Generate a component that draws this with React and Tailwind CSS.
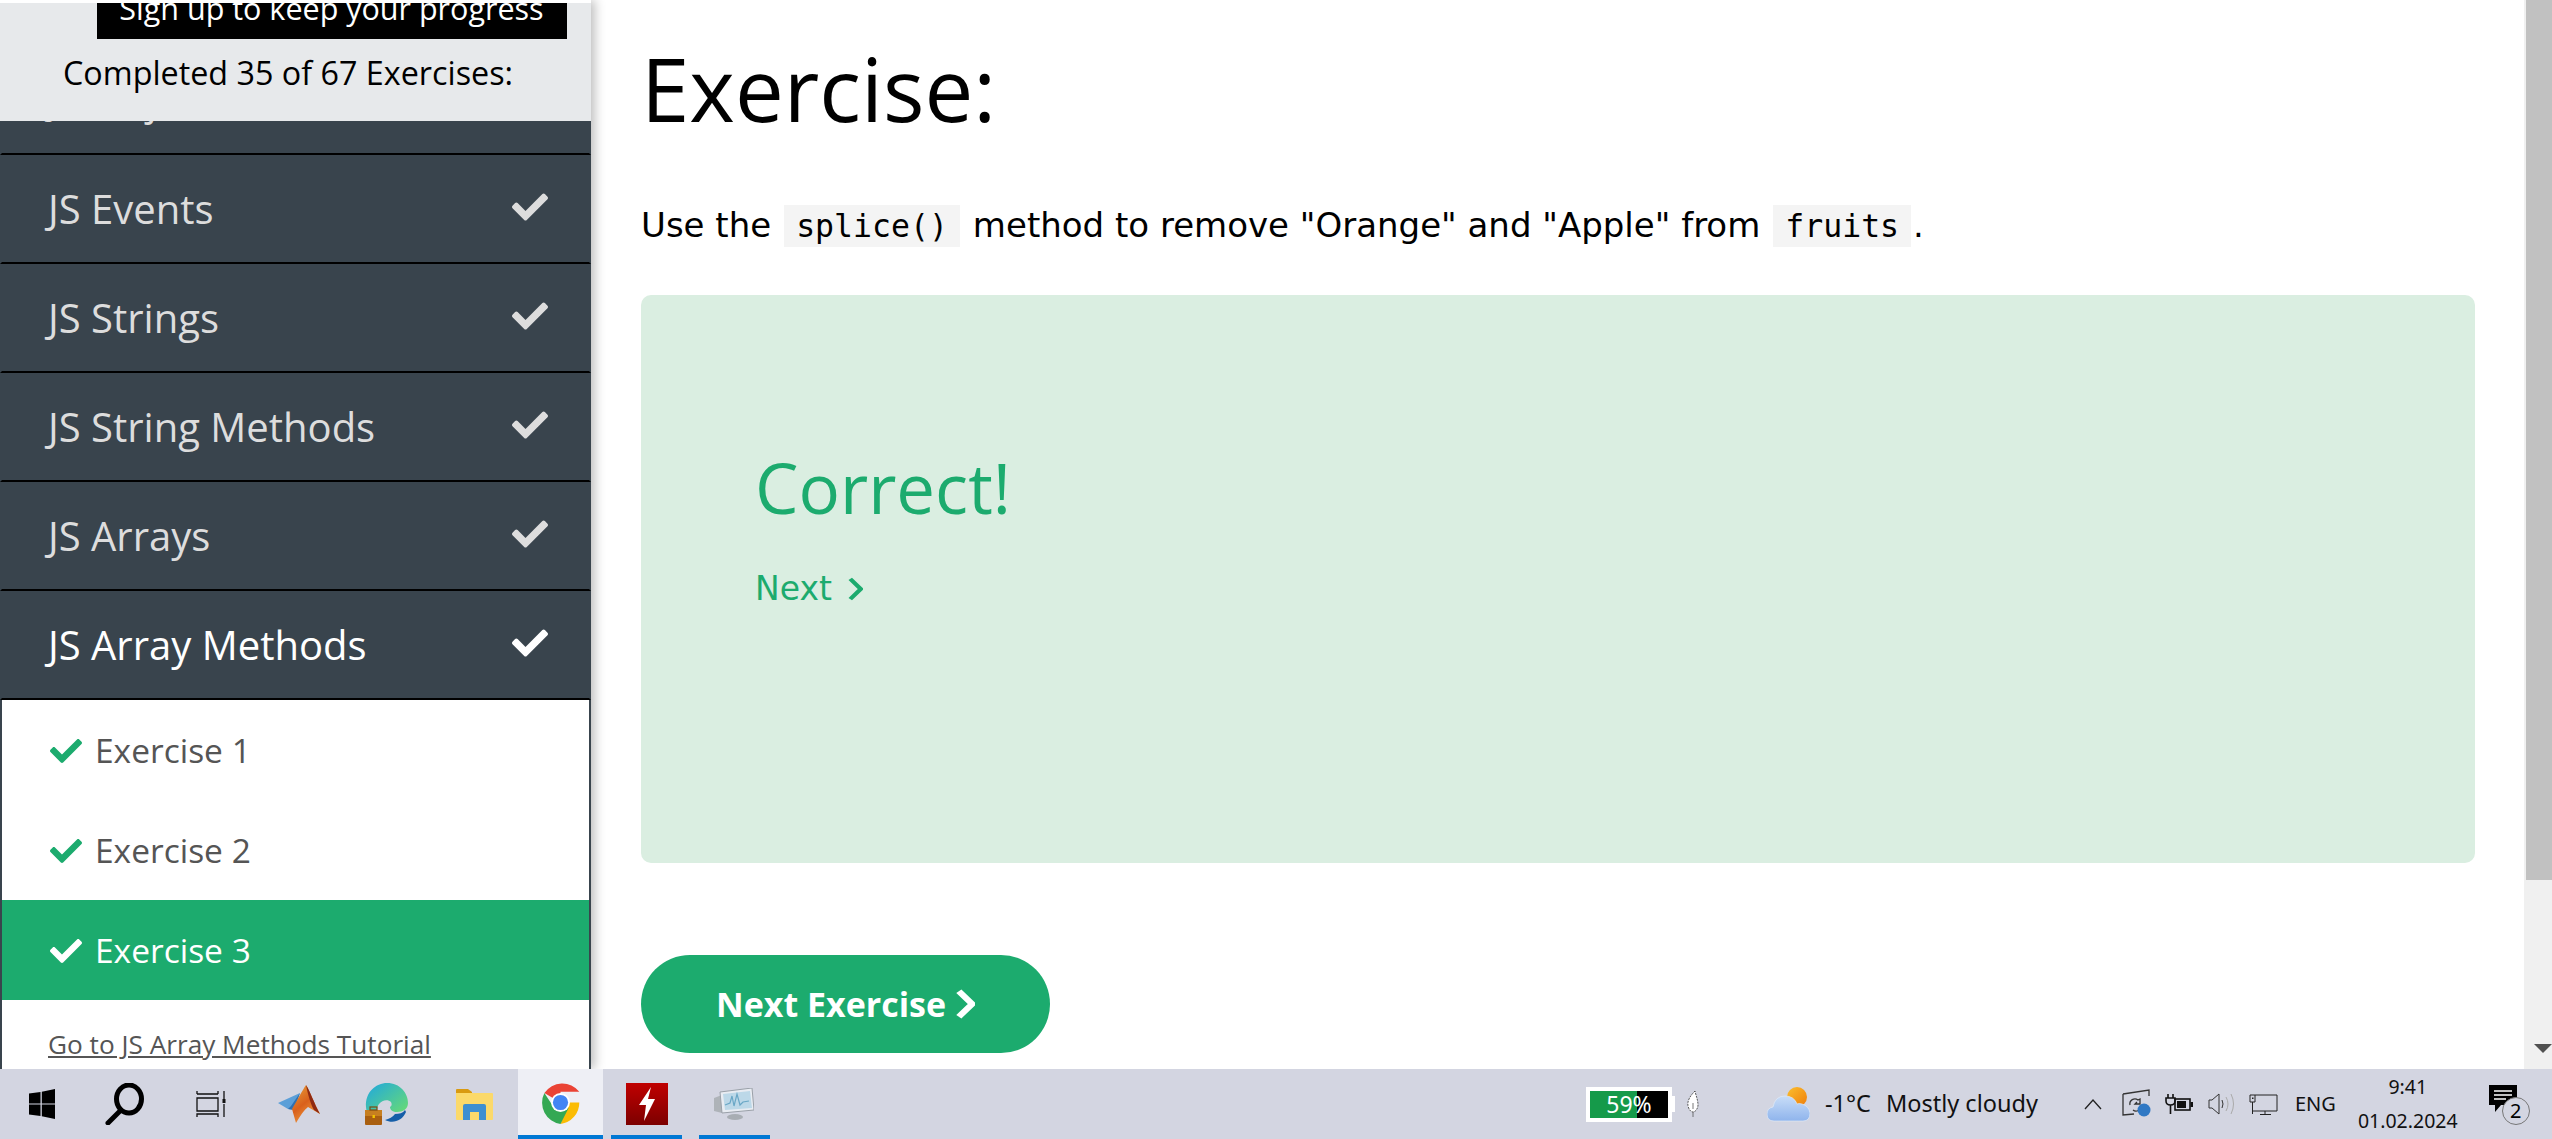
import { FaCheck } from "react-icons/fa";

const SEGOE = "font-['Open_Sans',sans-serif]";
const topics = ["JS Events", "JS Strings", "JS String Methods", "JS Arrays"];

function WindowsLogo() {
  return (
    <svg width="26" height="30" viewBox="0 0 26 30">
      <path d="M0 4.5 11.5 3v11.4H0zM12.8 2.8 26 0v14.4H12.8zM0 15.6h11.5V27L0 25.5zM12.800 15.600H26V30l-13.200-2.800z" fill="#000" />
    </svg>
  );
}

function SearchIcon() {
  return (
    <svg width="42" height="42" viewBox="0 0 42 42" fill="none" stroke="#000">
      <ellipse cx="25" cy="16" rx="12.5" ry="14" strokeWidth="5" />
      <path d="M16 28 4 40" strokeWidth="5" strokeLinecap="round" />
    </svg>
  );
}

function TaskViewIcon() {
  return (
    <svg width="30" height="28" viewBox="0 0 30 28" fill="none" stroke="#111" strokeWidth="1.3">
      <path d="M1 4V1M1 4h21M22 4V1M1 8h21v13H1zM1 27v-3h21v3M28 1v8M28 14v13" />
      <rect x="26.5" y="9" width="3" height="4" fill="#111" stroke="none" />
    </svg>
  );
}

function MatlabIcon() {
  return (
    <svg width="43" height="39" viewBox="0 0 43 39">
      <defs>
        <linearGradient id="ml" x1="0" y1="0" x2="0.6" y2="1">
          <stop offset="0" stopColor="#e8a33a" />
          <stop offset="0.55" stopColor="#d9601c" />
          <stop offset="1" stopColor="#f0a040" />
        </linearGradient>
      </defs>
      <path d="M0 18 22 8 16 25 10 24z" fill="#5b9fd8" />
      <path d="M10 24 16 25 22 8 13 21z" fill="#2f6fb0" />
      <path d="M28 0C24 6 20 14 14 24l4 14c4-7 8-13 12-16 4 2 8 5 12 7C36 18 32 6 28 0z" fill="url(#ml)" />
      <path d="M28 0c2 10 5 20 8 25l6 4C36 18 32 6 28 0z" fill="#8f2a12" />
    </svg>
  );
}

function EdgeIcon() {
  return (
    <svg width="43" height="43" viewBox="0 0 43 43">
      <defs>
        <linearGradient id="eg" x1="0" y1="0" x2="1" y2="1">
          <stop offset="0" stopColor="#1fa7e0" />
          <stop offset="1" stopColor="#6fe06a" />
        </linearGradient>
      </defs>
      <path d="M1 24C0 9 11 0 22 0c13 0 21 10 21 20 0 6-5 9-11 9-4 0-7-2-7-5 2-1 2-3 1-5-3-3-9-2-12 2-3 4-3 10 0 13C7 34 1 31 1 24z" fill="url(#eg)" />
      <path d="M20 37c8 4 17 1 21-8l-1-2c-2 3-6 4-10 4-2 3-6 5-10 6z" fill="#155ea8" />
      <rect x="0" y="27" width="17" height="15" rx="1" fill="#a95f10" />
      <rect x="0" y="27" width="17" height="6" fill="#c77f20" />
      <rect x="5" y="24" width="7" height="3" fill="none" stroke="#7b4a10" strokeWidth="1.2" />
      <rect x="7.5" y="32" width="2.4" height="3" fill="#f2c200" />
    </svg>
  );
}

function FolderIcon() {
  return (
    <svg width="37" height="31" viewBox="0 0 37 31">
      <path d="M0 1q0-1 1-1h11l4 3v4H0z" fill="#d99a10" />
      <path d="M0 4h36q1 0 1 1v25q0 1-1 1H1q-1 0-1-1z" fill="#fbd96a" />
      <path d="M7 31V17q0-2 2-2h19q2 0 2 2v14h-7v-8H14v8z" fill="#3d8fd1" />
    </svg>
  );
}

function ChromeIcon() {
  return (
    <svg width="43" height="43" viewBox="0 0 48 48">
      <path d="M24 24 6 13.5A24 24 0 0 1 45 12H24z" fill="#ea4335" />
      <path d="M24 24h21a24 24 0 0 1-21 24l9-24z" fill="#fbbc04" />
      <path d="M24 48A24 24 0 0 1 6 13.5L17 30l7-6 9 6z" fill="#34a853" />
      <circle cx="24" cy="24" r="10.5" fill="#fff" />
      <circle cx="24" cy="24" r="8.5" fill="#4285f4" />
    </svg>
  );
}

function FlashIcon() {
  return (
    <svg width="42" height="42" viewBox="0 0 42 42">
      <defs>
        <linearGradient id="fl" x1="0" y1="0" x2="0" y2="1">
          <stop offset="0" stopColor="#c00000" />
          <stop offset="1" stopColor="#7c0000" />
        </linearGradient>
      </defs>
      <rect width="42" height="42" fill="url(#fl)" />
      <path d="M25 4 13 22h7l-2 16 11-22h-7z" fill="#fff" />
    </svg>
  );
}

function ResourceIcon() {
  return (
    <svg width="40" height="32" viewBox="0 0 40 32">
      <path d="M0 10l8-3v18l-8-2z" fill="#aeb3b8" />
      <path d="M6 4 38 0l2 22-32 3z" fill="#e8ecf2" stroke="#9aa0a8" />
      <path d="M9 6 36 3l2 17-27 2z" fill="#bcd8e8" />
      <path d="M11 17l5-2 2-7 2 10 3-12 3 11 3-3 6-1" fill="none" stroke="#6aa7c6" strokeWidth="1.2" />
      <ellipse cx="21" cy="29" rx="8" ry="3" fill="#a8adb3" />
    </svg>
  );
}

function Leaf() {
  return (
    <svg width="12" height="28" viewBox="0 0 12 28">
      <path d="M8 1C3 6 0 11 1 16c1 4 3 6 5 6s5-3 5-7C11 10 9 6 8 1z" fill="#fff" stroke="#333" strokeDasharray="2 1" strokeWidth=".8" />
      <path d="M6 13v6M6 22v5" stroke="#555" strokeWidth=".8" />
    </svg>
  );
}

function WeatherIcon() {
  return (
    <svg width="43" height="35" viewBox="0 0 43 35">
      <defs>
        <linearGradient id="sun" x1="0" y1="0" x2="1" y2="1">
          <stop offset="0" stopColor="#fbbf2e" />
          <stop offset="1" stopColor="#ef7d0a" />
        </linearGradient>
        <linearGradient id="cl" x1="0" y1="0" x2="0" y2="1">
          <stop offset="0" stopColor="#c8ddf8" />
          <stop offset="1" stopColor="#8fb4ec" />
        </linearGradient>
      </defs>
      <circle cx="30" cy="10" r="10" fill="url(#sun)" />
      <path d="M7 34q-7 0-7-7 0-6 6-7 2-11 12-11 9 0 12 8 2-1 5 0 7 2 8 9 0 8-7 8z" fill="url(#cl)" stroke="#dfe9f7" strokeWidth=".7" />
    </svg>
  );
}

function SyncIcon() {
  return (
    <svg width="29" height="30" viewBox="0 0 29 30" fill="none">
      <path d="M1 5 27 1v6M1 5v21l11-1" stroke="#333" strokeWidth="1.3" />
      <path d="M8 16a5 5 0 0 1 8-5l2-1v5h-5l2-2M19 17a5 5 0 0 1-8 4" stroke="#333" strokeWidth="1.3" />
      <circle cx="22" cy="21" r="6.5" fill="#2f78c4" />
    </svg>
  );
}

function PowerIcon() {
  return (
    <svg width="28" height="20" viewBox="0 0 28 20" fill="none" stroke="#111" strokeWidth="1.6">
      <path d="M3 0v4M8 0v4M1 4h9v3q0 4-4.5 4T1 7zM5.5 11v9" />
      <rect x="10" y="5" width="15" height="11" />
      <rect x="12" y="7" width="9" height="7" fill="#111" stroke="none" />
      <rect x="25.5" y="8" width="2.5" height="5" fill="#111" stroke="none" />
    </svg>
  );
}

function SpeakerIcon() {
  return (
    <svg width="27" height="22" viewBox="0 0 27 22" fill="none" stroke="#333" strokeWidth="1">
      <path d="M1 7v8h3l7 6V1L4 7z" />
      <path d="M14 7q2 4 0 8" />
      <path d="M18 4q4 7 0 14M23 1q5 10 0 20" stroke="#aaa" />
    </svg>
  );
}

function NetworkIcon() {
  return (
    <svg width="29" height="21" viewBox="0 0 29 21" fill="none" stroke="#222" strokeWidth="1">
      <path d="M6 1h22v16H4" />
      <path d="M1 1h5v7H1zM3.500 8v12M16 17v3M11 20.500h11" />
      <rect x="3" y="3.500" width="1.500" height="1.500" fill="#222" stroke="none" />
    </svg>
  );
}

function MessageBadge() {
  return (
    <div className="relative w-[42px] h-[42px]">
      <svg width="29" height="27" viewBox="0 0 29 27">
        <path d="M0 0h28v20H12l-6 7v-7H0z" fill="#000" />
        <path d="M5 6h18M5 10h18M5 14h12" stroke="#fff" strokeWidth="1.5" />
      </svg>
      <span className="absolute left-[13px] top-[12px] w-[28px] h-[28px] rounded-full border border-[#777] bg-[#d3d5e1] flex items-center justify-center text-[20px] text-black font-['Noto_Sans',sans-serif]">
        2
      </span>
    </div>
  );
}

function Chevron({ w, h, stroke }) {
  return (
    <svg width={w} height={h} viewBox="0 0 10 20" preserveAspectRatio="none" fill="none" stroke="currentColor" strokeWidth={stroke}>
      <path d="M1.500 1.500 8.500 10l-7 8.500" />
    </svg>
  );
}

function TopicRow({ label, active }) {
  return (
    <div className={`h-[109px] shrink-0 border-x-2 border-x-[#39444d] border-b-2 border-b-black flex items-center justify-between pl-[46px] pr-[41px] ${active ? "text-white" : "text-[#dddddd]"}`}>
      <span className={`${SEGOE} text-[40px]`}>{label}</span>
      <FaCheck className="w-[36px] h-[36px] -mt-[4px]" />
    </div>
  );
}

function ExerciseRow({ n, current }) {
  return (
    <div className={`h-[100px] flex items-center pl-[48px] gap-[13px] ${current ? "bg-[#1cab6e] text-white" : "bg-white text-[#555555]"}`}>
      <FaCheck className={`w-[32px] h-[32px] mt-[2px] ${current ? "text-white" : "text-[#1cab6e]"}`} />
      <span className={`${SEGOE} text-[33.500px]`}>Exercise {n}</span>
    </div>
  );
}

function CodeChip({ children, className }) {
  return (
    <code className={`inline-block h-[42px] leading-[42px] px-[12px] bg-[#f4f4f4] font-['DejaVu_Sans_Mono',monospace] text-[31.500px] ${className}`}>
      {children}
    </code>
  );
}

export default function App() {
  return (
    <div className="w-[2552px] h-[1139px] flex flex-col overflow-hidden bg-white">
      <div className="flex flex-1 min-h-0">
        {/* Sidebar */}
        <aside className="w-[591px] shrink-0 flex flex-col overflow-hidden shadow-[4px_0_10px_rgba(0,0,0,0.25)] z-10 bg-white">
          <div className="h-[121px] shrink-0 border-t-[3px] border-white bg-[#e7e9eb] flex flex-col items-center overflow-hidden">
            <div className="w-[470px] h-[39px] -mt-[3px] ml-[72px] shrink-0 bg-black text-white overflow-hidden flex items-start justify-center">
              <span className={`${SEGOE} block text-[30.500px] leading-[40px] -mt-[12px] whitespace-nowrap`}>Sign up to keep your progress</span>
            </div>
            <p className={`${SEGOE} text-[32.300px] leading-[44px] mt-[11px] mr-[15px] text-black whitespace-nowrap`}>Completed 35 of 67 Exercises:</p>
          </div>
          <div className="flex-1 min-h-0 overflow-hidden bg-[#39444d]">
            <div className="-mt-[75px]">
              <TopicRow label="JS Objects" />
              {topics.map((t) => (
                <TopicRow key={t} label={t} />
              ))}
              <TopicRow label="JS Array Methods" active />
            </div>
            <div className="bg-white border-x-2 border-[#39444d] h-[400px]">
              <ExerciseRow n={1} />
              <ExerciseRow n={2} />
              <ExerciseRow n={3} current />
              <a className={`${SEGOE} block pl-[46px] pt-[25px] text-[26.200px] text-[#555555] underline whitespace-nowrap`}>
                Go to JS Array Methods Tutorial
              </a>
            </div>
          </div>
        </aside>

        {/* Main */}
        <main className="flex-1 min-w-0 pl-[50px] pr-[49px]">
          <h1 className={`${SEGOE} text-[87px] leading-[100px] mt-[38px] text-black`}>Exercise:</h1>
          <p className="font-['DejaVu_Sans',sans-serif] text-[34px] leading-[42px] mt-[66px] text-black whitespace-nowrap">
            Use the<CodeChip className="mx-[13px]">splice()</CodeChip>method to remove "Orange" and "Apple" from<CodeChip className="ml-[13px] mr-[2px]">fruits</CodeChip>.
          </p>
          <section className="mt-[48px] h-[568px] rounded-[10px] bg-[#daeee1] pl-[114px] pt-[142px] text-[#1cab6e]">
            <h2 className={`${SEGOE} text-[69px] leading-[100px]`}>Correct!</h2>
            <a className="flex items-center gap-[16px] font-['DejaVu_Sans',sans-serif] text-[33px] leading-[44px] mt-[30px]">
              Next
              <Chevron w={15} h={24} stroke={3} />
            </a>
          </section>
          <button className="mt-[92px] w-[409px] h-[98px] rounded-full bg-[#1cab6e] text-white font-['Open_Sans',sans-serif] font-bold text-[34px] flex items-center pl-[75px] gap-[10px]">
            Next Exercise
            <Chevron w={19} h={30} stroke={3.5} />
          </button>
        </main>

        {/* Scrollbar */}
        <div className="w-[28px] shrink-0 flex flex-col items-end bg-[#f0f0f0]">
          <div className="w-[26px] h-[880px] bg-[#c1c1c1]" />
          <div className="mt-[164px] mr-0 w-0 h-0 border-x-[9px] border-x-transparent border-t-[9px] border-t-[#505050]" />
        </div>
      </div>

      {/* Taskbar */}
      <footer className="h-[70px] shrink-0 bg-[#d3d5e1] flex items-stretch text-[#111] font-['Noto_Sans',sans-serif] z-20">
        <div className="w-[84px] flex items-center justify-center"><WindowsLogo /></div>
        <div className="w-[82px] flex items-center justify-center"><SearchIcon /></div>
        <div className="w-[90px] flex items-center justify-center"><TaskViewIcon /></div>
        <div className="w-[86px] flex items-center justify-center"><MatlabIcon /></div>
        <div className="w-[88px] flex items-center justify-center"><EdgeIcon /></div>
        <div className="w-[88px] flex items-center justify-center"><FolderIcon /></div>
        <div className="w-[85px] flex items-center justify-center bg-[#eeeff5] border-b-4 border-[#0078d4]"><ChromeIcon /></div>
        <div className="w-[87px] relative flex items-center justify-center">
          <FlashIcon />
          <div className="absolute bottom-0 left-[8px] w-[71px] h-[4px] bg-[#0078d4]" />
        </div>
        <div className="w-[88px] relative flex items-center justify-center">
          <ResourceIcon />
          <div className="absolute bottom-0 left-[9px] w-[71px] h-[4px] bg-[#0078d4]" />
        </div>

        {/* Battery widget */}
        <div className="ml-[808px] flex items-center">
          <div className="relative w-[86px] h-[35px] border-4 border-white bg-black flex">
            <div className="w-[47px] bg-[#159a4a]" />
            <span className="absolute inset-0 flex items-center justify-center text-white text-[23px] leading-none">59%</span>
          </div>
          <div className="w-[3px] h-[16px] bg-white" />
          <div className="ml-[12px]"><Leaf /></div>
        </div>

        <div className="ml-[68px] flex items-center"><WeatherIcon /></div>
        <span className="ml-[15px] self-center text-[23.500px] whitespace-nowrap">-1°C</span>
        <span className="ml-[15px] self-center text-[23.500px] whitespace-nowrap">Mostly cloudy</span>

        {/* Tray */}
        <div className="ml-[46px] flex items-center">
          <svg width="18" height="11" viewBox="0 0 18 11" fill="none" stroke="#222" strokeWidth="1.3"><path d="M1 10 9 1l8 9" /></svg>
        </div>
        <div className="ml-[20px] flex items-center"><SyncIcon /></div>
        <div className="ml-[14px] flex items-center"><PowerIcon /></div>
        <div className="ml-[15px] flex items-center"><SpeakerIcon /></div>
        <div className="ml-[14px] flex items-center"><NetworkIcon /></div>
        <span className="ml-[17px] self-center text-[20px]">ENG</span>
        <div className="ml-[22px] w-[100px] flex flex-col items-center justify-center text-[19.500px] leading-[34px]">
          <span>9:41</span>
          <span>01.02.2024</span>
        </div>
        <div className="ml-[31px] flex items-center mt-[4px]"><MessageBadge /></div>
      </footer>
    </div>
  );
}
